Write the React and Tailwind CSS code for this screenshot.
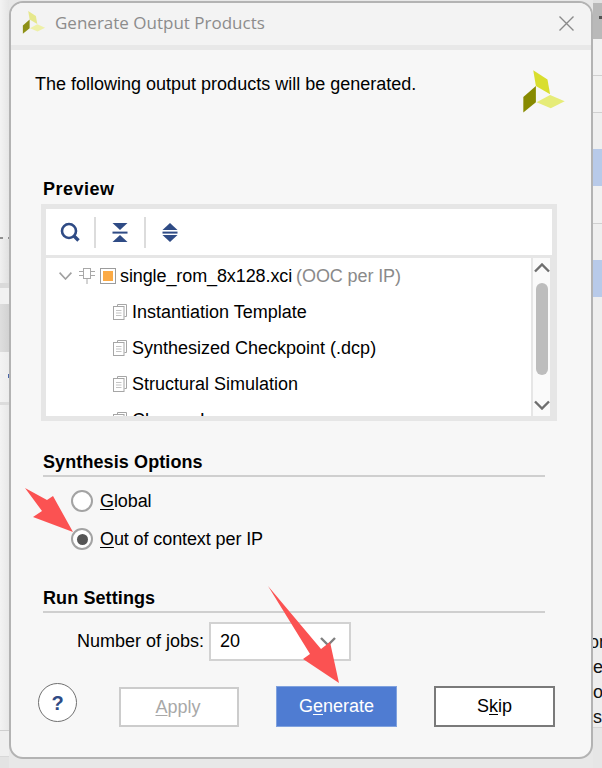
const navy = "#2f4b85";

function Logo({ className, top, dark, light }) {
  return (
    <svg className={className} viewBox="129 210 127 129">
      <polygon points="160,210 203,238 211,283 168,258" fill={top} />
      <polygon points="168,258 168,307 130,338 130,291" fill={dark} />
      <polygon points="211,285 255,304 213,325 170,307" fill={light} />
    </svg>
  );
}

function DocIcon() {
  return (
    <svg width="14" height="16" viewBox="0 0 14 16" fill="none" stroke="#a6a6a6" strokeWidth="1">
      <path d="M4.5 2.5V.5h9v12h-2" />
      <rect x="0.5" y="2.5" width="10.5" height="13" fill="#fff" />
      <path d="M3 6.5h5.5M3 9h5.5M3 11.5h5.5" stroke="#c4c4c4" />
    </svg>
  );
}

function PortIcon() {
  return (
    <svg width="16" height="16" viewBox="0 0 16 16" fill="none" stroke="#a8a8a8" strokeWidth="1">
      <rect x="4.5" y="0.5" width="7" height="10" />
      <path d="M0 3.5h4.5M0 7.5h4.5M11.5 3.5H16M11.5 7.5H16M8 10.5V16" />
    </svg>
  );
}

function SectionTitle({ className = "tracking-[0.1px]", children }) {
  return (
    <div className={`ml-[32px] h-[24px] pt-[1px] text-[18px] leading-[24px] font-bold text-black ${className}`}>{children}</div>
  );
}

function Rule() {
  return <div className="mt-[2px] ml-[32px] h-[2px] w-[502px] bg-[#cfcfcf]" />;
}

function Radio({ checked, children }) {
  return (
    <div className="flex h-[38px] items-center pl-[60px] text-[18px] text-black">
      <span className="flex h-[22px] w-[22px] items-center justify-center rounded-full border-2 border-[#a3a3a3] bg-white">
        {checked && <span className="h-[11px] w-[11px] rounded-full bg-[#555555]" />}
      </span>
      <span className="ml-[7px] tracking-[-0.1px]">{children}</span>
    </div>
  );
}

function TreeFile({ children }) {
  return (
    <div className="flex h-[36px] shrink-0 items-center pl-[67px] text-[18px] whitespace-nowrap text-black">
      <DocIcon />
      <span className="ml-[5px]">{children}</span>
    </div>
  );
}

function Band({ h, className = "", children }) {
  return (
    <div className={`overflow-hidden ${className}`} style={{ height: h }}>
      {children}
    </div>
  );
}

function LeftStrip() {
  return (
    <div className="w-[9px] shrink-0 bg-[#efefef]">
      <Band h={237} className="bg-gradient-to-r from-[#f3f3f3] to-[#e6e6e6]" />
      <Band h={2} className="flex justify-between bg-[#eaeaea]">
        <div className="w-[3px] bg-[#8f8f8f]" />
        <div className="w-[1px] bg-[#8f8f8f]" />
      </Band>
      <Band h={44} className="bg-gradient-to-r from-[#f0f0f0] to-[#e0e0e0]" />
      <Band h={5} className="bg-[#dadada]" />
      <Band h={16} className="bg-[#f1f1f1]" />
      <Band h={48} className="bg-gradient-to-r from-[#dedede] to-[#d2d2d2]" />
      <Band h={22} className="bg-gradient-to-r from-[#f3f3f3] to-[#ececec]" />
      <Band h={4} className="flex justify-end bg-[#f0f0f0]">
        <div className="w-[1px] bg-[#4a66a8]" />
      </Band>
      <Band h={24} className="bg-gradient-to-r from-[#f3f3f3] to-[#ececec]" />
      <Band h={3} className="bg-[#dcdcdc]" />
      <Band h={325} className="bg-gradient-to-r from-[#f3f3f3] to-[#e8e8e8]" />
      <Band h={1} className="bg-[#cfcfcf]" />
      <Band h={25} className="bg-[#efefef]" />
      <Band h={1} className="bg-[#d8d8d8]" />
      <Band h={11} className="bg-[#e3e3e3]" />
    </div>
  );
}

function StripText({ h, children }) {
  return (
    <Band h={h} className="bg-[#eeeeee]">
      <div className="-ml-[4px] text-[18px] leading-[25px] whitespace-nowrap text-[#111111]">{children}</div>
    </Band>
  );
}

function RightStrip() {
  return (
    <div className="w-[9px] shrink-0 bg-[#efefef]">
      <Band h={3} className="bg-[#e2e2e2]" />
      <Band h={36} className="bg-[#b9b9b9] pt-[13px]">
        <div className="ml-[6px] h-[3px] w-[3px] bg-[#555555]" />
      </Band>
      <Band h={36} className="bg-[#f1f1f1]" />
      <Band h={1} className="bg-[#d0d0d0]" />
      <Band h={36} className="bg-[#f1f1f1]" />
      <Band h={1} className="bg-[#d0d0d0]" />
      <Band h={36} className="bg-[#efefef]" />
      <Band h={37} className="bg-[#b8cae9]" />
      <Band h={37} className="bg-[#f1f1f1]" />
      <Band h={1} className="bg-[#d0d0d0]" />
      <Band h={36} className="bg-[#efefef]" />
      <Band h={37} className="bg-[#b8cae9]" />
      <Band h={333} className="bg-[#eeeeee]" />
      <StripText h={25}>or</StripText>
      <StripText h={25}><span className="ml-[4px]">e</span></StripText>
      <StripText h={25}><span className="ml-[4px]">o</span></StripText>
      <StripText h={22}><span className="ml-[4px]">s</span></StripText>
      <Band h={1} className="bg-[#d6d6d6]" />
      <Band h={40} className="bg-[#e6e6e6]" />
    </div>
  );
}

export default function App() {
  return (
    <div className="relative flex h-[768px] w-[602px] overflow-hidden bg-[#efefef] font-['Liberation_Sans',Arial,sans-serif]">
      <LeftStrip />

      <div className="flex w-[584px] shrink-0 flex-col bg-[#e8e8e8]">
        <div className="mt-[1px] h-[758px] shrink-0 overflow-hidden rounded-[14px] border-2 border-[#b3b3b3] bg-[#f7f7f7]">
          <div className="flex h-[47px] items-center justify-between border-b-[5px] border-[#e8e8e8] bg-[#f3f3f3] pr-[17px] pb-[2px] pl-[11px]">
            <div className="flex items-center">
              <Logo className="-mt-[2px] h-[23px] w-[24px]" top="#e6e88c" dark="#8d9016" light="#eef0a8" />
              <span className="ml-[9px] font-['Open_Sans',sans-serif] text-[17px] text-[#8c8c8c]">Generate Output Products</span>
            </div>
            <svg width="15" height="15" viewBox="0 0 15 15" stroke="#8a8a8a" strokeWidth="1.4">
              <path d="M0.5 0.5l14 14M14.5 0.5l-14 14" />
            </svg>
          </div>

          <div className="flex h-[63px] items-start justify-between pt-[20px] pr-[26px] pl-[24px]">
            <span className="mt-[2px] text-[18px] leading-[24px] text-black">The following output products will be generated.</span>
            <Logo className="h-[43px] w-[42px]" top="#d9de2e" dark="#878a00" light="#e6ec78" />
          </div>

          <div className="mt-[63px]">
            <SectionTitle className="tracking-[0.5px]">Preview</SectionTitle>
          </div>

          <div className="mt-[4px] ml-[30px] h-[217px] w-[516px] bg-[#e6e6e6] pt-[5px] pl-[5px]">
            <div className="flex h-[46px] w-[506px] items-center bg-white">
              <svg className="ml-[14px]" width="20" height="20" viewBox="0 0 20 20" fill="none" stroke={navy}>
                <circle cx="9" cy="9" r="7" strokeWidth="2.6" />
                <path d="M14 14l4.5 4.5" strokeWidth="3.4" />
              </svg>
              <div className="ml-[14px] h-[31px] w-[2px] bg-[#dcdcdc]" />
              <svg className="ml-[16px]" width="16" height="19" viewBox="0 0 16 19" fill={navy}>
                <polygon points="0.5,0 15.5,0 8,7" />
                <rect x="0.5" y="8.6" width="15" height="2" />
                <polygon points="8,12 15.5,19 0.5,19" />
              </svg>
              <div className="ml-[16px] h-[31px] w-[2px] bg-[#dcdcdc]" />
              <svg className="ml-[16px]" width="16" height="19" viewBox="0 0 16 19" fill={navy}>
                <polygon points="8,0 15.5,7 0.5,7" />
                <rect x="0.5" y="8.6" width="15" height="2" />
                <polygon points="0.5,12 15.5,12 8,19" />
              </svg>
            </div>

            <div className="mt-[3px] flex h-[158px]">
              <div className="flex h-full w-[485px] flex-col overflow-hidden bg-white">
                <div className="flex h-[36px] shrink-0 items-center pl-[13px] text-[18px] whitespace-nowrap">
                  <svg width="13" height="8" viewBox="0 0 13 8" fill="none" stroke="#a0a0a0" strokeWidth="1.6">
                    <path d="M0.6 0.6L6.5 7l5.9-6.4" />
                  </svg>
                  <span className="ml-[7px] flex"><PortIcon /></span>
                  <span className="ml-[5px] flex h-[16px] w-[16px] items-center justify-center border border-[#9c9c9c]">
                    <span className="h-[10px] w-[10px] bg-[#fbaa45]" />
                  </span>
                  <span className="ml-[4px] tracking-[-0.1px] text-black">single_rom_8x128.xci</span>
                  <span className="ml-[4px] tracking-[-0.1px] text-[#8a8a8a]">(OOC per IP)</span>
                </div>
                <TreeFile>Instantiation Template</TreeFile>
                <TreeFile>Synthesized Checkpoint (.dcp)</TreeFile>
                <TreeFile>Structural Simulation</TreeFile>
                <TreeFile>Change Log</TreeFile>
              </div>
              <div className="ml-[2px] flex h-full w-[17px] flex-col items-center bg-[#fafafa]">
                <svg className="mt-[5px]" width="16" height="10" viewBox="0 0 16 10" fill="none" stroke="#6e6e6e" strokeWidth="2.4">
                  <path d="M1 8.5l7-7 7 7" />
                </svg>
                <div className="mt-[10px] h-[92px] w-[12px] rounded-full bg-[#bdbdbd]" />
                <svg className="mt-[25px]" width="16" height="10" viewBox="0 0 16 10" fill="none" stroke="#6e6e6e" strokeWidth="2.4">
                  <path d="M1 1.5l7 7 7-7" />
                </svg>
              </div>
            </div>
          </div>

          <div className="mt-[28px]">
            <SectionTitle>Synthesis Options</SectionTitle>
            <Rule />
          </div>
          <div className="mt-[5px]">
            <Radio><u className="underline-offset-2">G</u>lobal</Radio>
            <Radio checked><u className="underline-offset-2">O</u>ut of context per IP</Radio>
          </div>

          <div className="mt-[27px]">
            <SectionTitle>Run Settings</SectionTitle>
            <Rule />
          </div>
          <div className="mt-[9px] flex h-[39px] items-center pl-[66px] text-[18px] text-black">
            <span className="w-[132px]">Number of jobs:</span>
            <div className="flex h-[39px] w-[142px] items-center justify-between border-2 border-[#d2d2d2] bg-white pr-[13px] pl-[9px]">
              <span>20</span>
              <svg width="16" height="9" viewBox="0 0 16 9" fill="none" stroke="#7f7f7f" strokeWidth="2.4">
                <path d="M1 1l7 7 7-7" />
              </svg>
            </div>
          </div>

          <div className="mt-[22px] flex items-start pl-[27px] text-[18px]">
            <div className="flex h-[39px] w-[39px] items-center justify-center rounded-full border border-[#707070] bg-white text-[20px] font-bold text-[#2f4b85]">?</div>
            <button className="mt-[4px] ml-[42px] h-[40px] w-[120px] border-2 border-[#cccccc] bg-white pr-[2px] text-[#a8a8a8]">
              <u className="underline-offset-2">A</u>pply
            </button>
            <button className="mt-[3px] ml-[37px] h-[41px] w-[121px] border border-[#80a2de] bg-[#4f7cd2] text-white">
              G<u className="underline-offset-2">e</u>nerate
            </button>
            <button className="mt-[3px] ml-[37px] h-[41px] w-[121px] border-2 border-[#7a7a7a] bg-white text-black">
              S<u className="underline-offset-2">k</u>ip
            </button>
          </div>
        </div>
      </div>

      <RightStrip />

      {/* red annotation arrows drawn over the dialog */}
      <svg className="pointer-events-none absolute inset-0" width="602" height="768" fill="#fb5252">
        <polygon points="25,488 47,500 53,496 73,532 33,517 42,511" />
        <polygon points="268,586 321,649 330,642 339,683 303,659 310,654" />
      </svg>
    </div>
  );
}
